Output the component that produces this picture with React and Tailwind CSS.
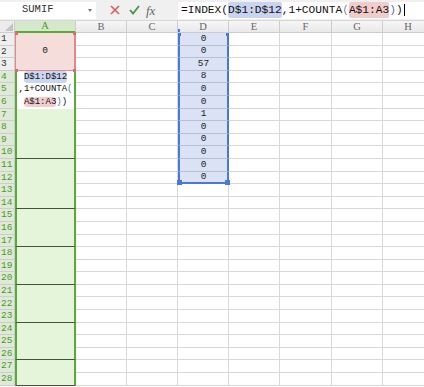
import React from "react";

const COLS = ["A", "B", "C", "D", "E", "F", "G", "H"];
const D_VALS = ["0", "0", "57", "8", "0", "0", "1", "0", "0", "0", "0", "0"];
const ROW_COUNT = 28;

// merged blocks in column A after the edited cell (start row, span)
const GREEN_BLOCKS = [
  [7, "row-span-4"],
  [11, "row-span-4"],
  [15, "row-span-3"],
  [18, "row-span-3"],
  [21, "row-span-3"],
  [24, "row-span-3"],
  [27, "row-span-2"],
];

const mono = "font-['Liberation_Mono',monospace]";

function Toolbar() {
  return (
    <div className="flex h-[21px] items-center border-b border-[#d6d6d6] bg-[#f0f0f0]">
      <div
        className={`relative flex h-[17px] w-[96px] items-center bg-white pl-[22px] text-[10.5px] text-[#333] ${mono}`}
      >
        SUMIF
        <span className="absolute right-[4px] top-[7px] h-0 w-0 border-x-[2.5px] border-t-[3px] border-x-transparent border-t-[#777]" />
      </div>
      <div className="flex w-[82px] items-center pl-[14px]">
        <svg width="10" height="10" viewBox="0 0 10 10">
          <path d="M1 1L9 9M9 1L1 9" stroke="#e05a5a" strokeWidth="1.6" />
        </svg>
        <svg width="11" height="10" viewBox="0 0 11 10" className="ml-[9px]">
          <path d="M1 5L4 8.5L10 1" stroke="#3f9b3f" strokeWidth="1.8" fill="none" />
        </svg>
        <span className="ml-[6px] font-['Liberation_Serif',serif] text-[13px] italic leading-none text-[#666]">
          fx
        </span>
      </div>
      <div
        className={`flex h-[17px] flex-1 items-center bg-white pl-[3px] text-[11.2px] text-[#111] ${mono}`}
      >
        <span>=INDEX(</span>
        <span className="rounded-[2px] bg-[#c9d4f1]">D$1:D$12</span>
        <span>,1+COUNTA</span>
        <span className="text-[#888]">(</span>
        <span className="rounded-[2px] bg-[#f1cccc]">A$1:A3</span>
        <span className="text-[#4a6fd0]">)</span>
        <span>)</span>
        <span className="ml-[1px] h-[12px] w-[1px] bg-black" />
      </div>
    </div>
  );
}

function HeaderRow() {
  return (
    <>
      <div className="relative border-b border-r border-[#cdcdcd] bg-[#ececec]">
        <svg width="8" height="8" viewBox="0 0 8 8" className="absolute bottom-[1px] right-[1px]">
          <path d="M8 0V8H0Z" fill="#c4c4c4" />
        </svg>
      </div>
      {COLS.map((c) => (
        <div
          key={c}
          className={
            c === "A"
              ? "flex items-center justify-center border-b-2 border-r border-b-[#5aab36] border-r-[#cdcdcd] bg-[#d6e8cc] font-['Liberation_Serif',serif] text-[10.5px] text-[#4c9a28]"
              : "relative flex items-center justify-center border-b border-r border-[#cdcdcd] bg-gradient-to-b from-[#f6f6f6] to-[#e9e9e9] font-['Liberation_Serif',serif] text-[10.5px] text-[#666]"
          }
        >
          {c}
          {c === "D" && (
            <span className="absolute bottom-0 left-0 h-[3px] w-[2px] bg-[#4a78d8]" />
          )}
        </div>
      ))}
    </>
  );
}

function Handle({ className }) {
  return <span className={`absolute bg-[#4a78d8] ${className}`} />;
}

function RedHandle({ className }) {
  return <span className={`absolute bg-[#de6b6b] ${className}`} />;
}

function ColA({ row }) {
  if (row === 1) {
    return (
      <div
        className={`relative row-span-3 flex items-center justify-center border-x border-b border-[#e08b8b] border-r-2 bg-[#f5dddc] text-[9.5px] text-[#222] ${mono}`}
      >
        0
        <RedHandle className="-left-[1px] -top-[1px] h-[3px] w-[3px]" />
        <RedHandle className="-right-[2px] -top-[1px] h-[3px] w-[3px]" />
        <RedHandle className="-bottom-[2px] -left-[1px] h-[3px] w-[3px]" />
        <RedHandle className="-bottom-[2px] -right-[2px] h-[3px] w-[3px]" />
      </div>
    );
  }
  if (row === 4) {
    return (
      <div
        className={`row-span-3 flex flex-col items-center justify-center border-x-2 border-[#5aab36] bg-white text-[9px] leading-[12.6px] text-[#111] ${mono}`}
      >
        <span className="rounded-[3px] bg-[#cbd6f2]">D$1:D$12</span>
        <span>
          ,1+COUNTA<span className="text-[#4a6fd0]">(</span>
        </span>
        <span>
          <span className="rounded-[3px] bg-[#f1cdcd]">A$1:A3</span>
          <span className="text-[#4a6fd0]">)</span>)
        </span>
      </div>
    );
  }
  const block = GREEN_BLOCKS.find(([start]) => start === row);
  if (!block) return null;
  return (
    <div
      className={`${block[1]} border-x-2 border-b border-x-[#5aab36] border-b-[#3f5534] bg-[#e5f5da]`}
    />
  );
}

function DCell({ row }) {
  if (row > 12) {
    return <div className="border-b border-r border-[#d8d8d8] bg-white" />;
  }
  const last = row === 12;
  return (
    <div
      className={`relative flex items-center justify-center border-x-2 border-x-[#4a78d8] bg-[#dbe2f6] text-[9.5px] text-[#222] ${mono} ${
        last ? "border-b-2 border-b-[#4a78d8]" : "border-b border-b-[#b7bfd3]"
      }`}
    >
      {D_VALS[row - 1]}
      {row === 1 && (
        <>
          <Handle className="-left-[2px] top-0 h-[3px] w-[3px]" />
          <Handle className="-right-[2px] top-0 h-[3px] w-[3px]" />
        </>
      )}
      {last && (
        <>
          <Handle className="-bottom-[3px] -left-[3px] h-[5px] w-[5px]" />
          <Handle className="-bottom-[3px] -right-[3px] h-[5px] w-[5px]" />
        </>
      )}
    </div>
  );
}

function Row({ row }) {
  const sel = row >= 4;
  return (
    <>
      <div
        className={`flex items-center border-b border-r border-[#cdcdcd] pl-[1px] text-[9.5px] leading-none ${mono} ${
          sel ? "bg-[#dfe9d8] text-[#4c9a28]" : "bg-[#efefef] text-[#333]"
        }`}
      >
        {row}
      </div>
      <ColA row={row} />
      <div className="border-b border-r border-[#d8d8d8] bg-white" />
      <div className="border-b border-r border-[#d8d8d8] bg-white" />
      <DCell row={row} />
      {["E", "F", "G", "H"].map((c) => (
        <div key={c} className="border-b border-r border-[#d8d8d8] bg-white" />
      ))}
    </>
  );
}

export default function App() {
  const rows = Array.from({ length: ROW_COUNT }, (_, i) => i + 1);
  return (
    <div className="h-[387px] w-[424px] overflow-hidden bg-white">
      <Toolbar />
      <div className="grid w-[434px] grid-cols-[15px_61px_51px_51px_51px_51px_52px_51px_51px] grid-rows-[12px_repeat(28,12.6px)]">
        <HeaderRow />
        {rows.map((r) => (
          <Row key={r} row={r} />
        ))}
      </div>
    </div>
  );
}
